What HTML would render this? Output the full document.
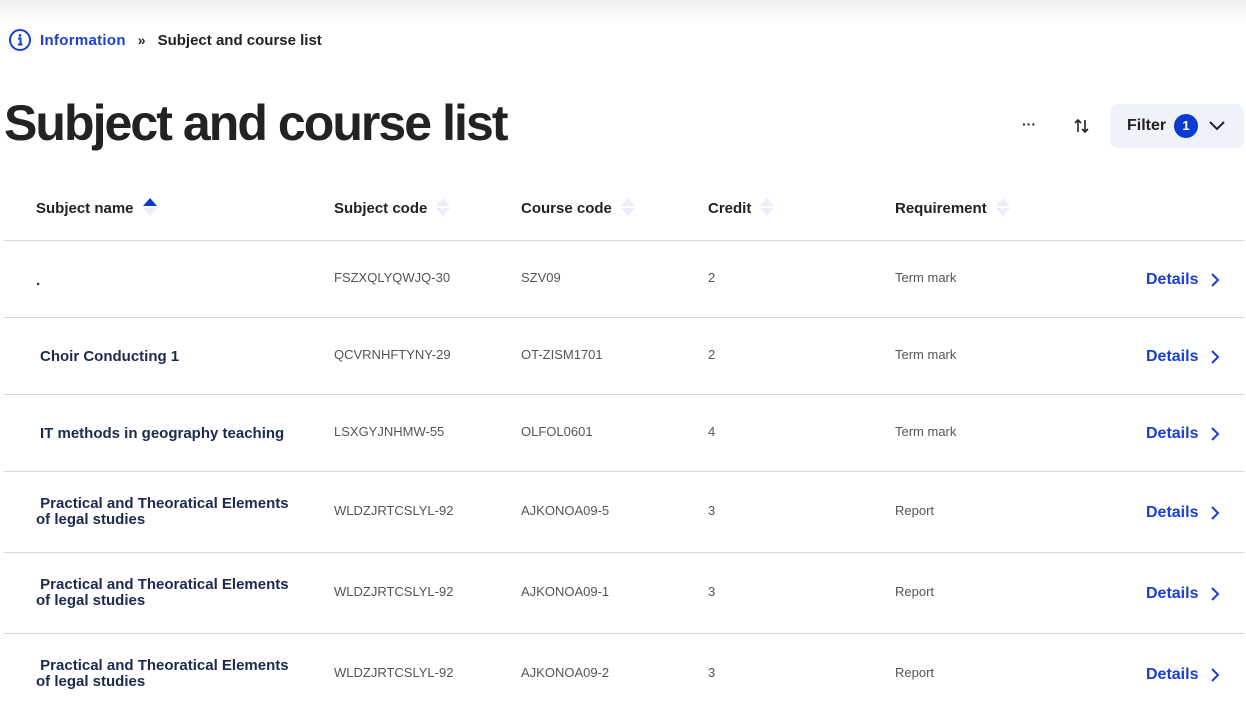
<!DOCTYPE html>
<html><head><style>
*{margin:0;padding:0;box-sizing:border-box}
body{width:1246px;height:713px;overflow:hidden;background:#fff;font-family:"Liberation Sans",sans-serif;color:#222;position:relative}
.top{position:absolute;left:0;top:0;width:1246px;height:24px;background:linear-gradient(#efefef,#fff)}
.bc{position:absolute;top:28px;left:8px;display:flex;align-items:center;font-size:15px;font-weight:bold}
.bc .info{color:#1a3fd1;margin-left:8px;letter-spacing:0.3px}
.bc .sep{margin:0 12px;font-size:14px}
h1{position:absolute;left:4px;top:94px;font-size:50px;font-weight:bold;letter-spacing:-1.95px;color:#222}
.dots{position:absolute;left:1022px;top:116px;font-size:14px;font-weight:bold}
.sortic{position:absolute;left:1073px;top:117px}
.filter{position:absolute;left:1110px;top:104px;width:134px;height:44px;background:#f0f2fa;border-radius:8px;font-weight:bold;font-size:16px;color:#222}
.filter span.t{position:absolute;left:17px;top:13px}
.badge{position:absolute;left:64px;top:10px;width:24px;height:24px;border-radius:50%;background:#0a3bd1;color:#fff;font-size:13px;text-align:center;line-height:24px}
.chev{position:absolute;left:98px;top:13px}
.th{position:absolute;top:198px;font-size:15px;font-weight:bold;color:#222;display:flex;align-items:center}
.arr{margin-left:9px;display:inline-block;width:14px;height:20px;position:relative}
.arr:before{content:"";position:absolute;left:0;top:0;border-left:7px solid transparent;border-right:7px solid transparent;border-bottom:8px solid #eceef7}
.arr:after{content:"";position:absolute;left:0;top:10px;border-left:7px solid transparent;border-right:7px solid transparent;border-top:8px solid #eceef7}
.arr.up:before{border-bottom-color:#0a3bd1}
.line{position:absolute;left:4px;width:1240px;height:1px;background:#d6d6d6}
.c{position:absolute;font-size:13px;color:#555}
.n{position:absolute;left:36px;font-size:15px;font-weight:bold;color:#1b2a4e;line-height:16px}
.d{position:absolute;left:1146px;font-size:16px;font-weight:bold;color:#1a3fd1;display:flex;align-items:center}
.d svg{margin-left:12px}
</style></head><body>
<div class="top"></div>
<div class="bc">
<svg width="24" height="24" viewBox="0 0 24 24"><circle cx="12" cy="12" r="10" fill="none" stroke="#1a3fd1" stroke-width="2"/><circle cx="12" cy="7.5" r="1.4" fill="#1a3fd1"/><path d="M10 10.5h2.5v6M10 16.5h4.5" stroke="#1a3fd1" stroke-width="2" fill="none"/></svg>
<span class="info">Information</span><span class="sep">»</span><span>Subject and course list</span></div>
<h1>Subject and course list</h1>
<div class="dots">···</div>
<svg class="sortic" width="18" height="18" viewBox="0 0 18 18"><path d="M5 15V3M2 6l3-3 3 3M12 3v12M9 12l3 3 3-3" stroke="#222" stroke-width="1.6" fill="none"/></svg>
<div class="filter"><span class="t">Filter</span><div class="badge">1</div>
<svg class="chev" width="18" height="18" viewBox="0 0 18 18"><path d="M2 5l7 7 7-7" stroke="#222" stroke-width="2" fill="none"/></svg></div>

<div class="th" style="left:36px">Subject name<span class="arr up"></span></div>
<div class="th" style="left:334px">Subject code<span class="arr"></span></div>
<div class="th" style="left:521px">Course code<span class="arr"></span></div>
<div class="th" style="left:708px">Credit<span class="arr"></span></div>
<div class="th" style="left:895px">Requirement<span class="arr"></span></div>

<div class="line" style="top:240px"></div>
<div class="line" style="top:317px"></div>
<div class="line" style="top:394px"></div>
<div class="line" style="top:471px"></div>
<div class="line" style="top:552px"></div>
<div class="line" style="top:633px"></div>

<div class="n" style="top:273px">.</div>
<div class="c" style="left:334px;top:270px">FSZXQLYQWJQ-30</div><div class="c" style="left:521px;top:270px">SZV09</div><div class="c" style="left:708px;top:270px">2</div><div class="c" style="left:895px;top:270px">Term mark</div>
<div class="d" style="top:271px">Details<svg width="10" height="16" viewBox="0 0 10 16"><path d="M2 2l6 6-6 6" stroke="#1a3fd1" stroke-width="2" fill="none"/></svg></div>

<div class="n" style="left:40px;top:349px">Choir Conducting 1</div>
<div class="c" style="left:334px;top:347px">QCVRNHFTYNY-29</div><div class="c" style="left:521px;top:347px">OT-ZISM1701</div><div class="c" style="left:708px;top:347px">2</div><div class="c" style="left:895px;top:347px">Term mark</div>
<div class="d" style="top:348px">Details<svg width="10" height="16" viewBox="0 0 10 16"><path d="M2 2l6 6-6 6" stroke="#1a3fd1" stroke-width="2" fill="none"/></svg></div>

<div class="n" style="left:40px;top:426px">IT methods in geography teaching</div>
<div class="c" style="left:334px;top:424px">LSXGYJNHMW-55</div><div class="c" style="left:521px;top:424px">OLFOL0601</div><div class="c" style="left:708px;top:424px">4</div><div class="c" style="left:895px;top:424px">Term mark</div>
<div class="d" style="top:425px">Details<svg width="10" height="16" viewBox="0 0 10 16"><path d="M2 2l6 6-6 6" stroke="#1a3fd1" stroke-width="2" fill="none"/></svg></div>

<div class="n" style="top:496px">&nbsp;Practical and Theoratical Elements<br>of legal studies</div>
<div class="c" style="left:334px;top:503px">WLDZJRTCSLYL-92</div><div class="c" style="left:521px;top:503px">AJKONOA09-5</div><div class="c" style="left:708px;top:503px">3</div><div class="c" style="left:895px;top:503px">Report</div>
<div class="d" style="top:504px">Details<svg width="10" height="16" viewBox="0 0 10 16"><path d="M2 2l6 6-6 6" stroke="#1a3fd1" stroke-width="2" fill="none"/></svg></div>

<div class="n" style="top:577px">&nbsp;Practical and Theoratical Elements<br>of legal studies</div>
<div class="c" style="left:334px;top:584px">WLDZJRTCSLYL-92</div><div class="c" style="left:521px;top:584px">AJKONOA09-1</div><div class="c" style="left:708px;top:584px">3</div><div class="c" style="left:895px;top:584px">Report</div>
<div class="d" style="top:585px">Details<svg width="10" height="16" viewBox="0 0 10 16"><path d="M2 2l6 6-6 6" stroke="#1a3fd1" stroke-width="2" fill="none"/></svg></div>

<div class="n" style="top:658px">&nbsp;Practical and Theoratical Elements<br>of legal studies</div>
<div class="c" style="left:334px;top:665px">WLDZJRTCSLYL-92</div><div class="c" style="left:521px;top:665px">AJKONOA09-2</div><div class="c" style="left:708px;top:665px">3</div><div class="c" style="left:895px;top:665px">Report</div>
<div class="d" style="top:666px">Details<svg width="10" height="16" viewBox="0 0 10 16"><path d="M2 2l6 6-6 6" stroke="#1a3fd1" stroke-width="2" fill="none"/></svg></div>
</body></html>
